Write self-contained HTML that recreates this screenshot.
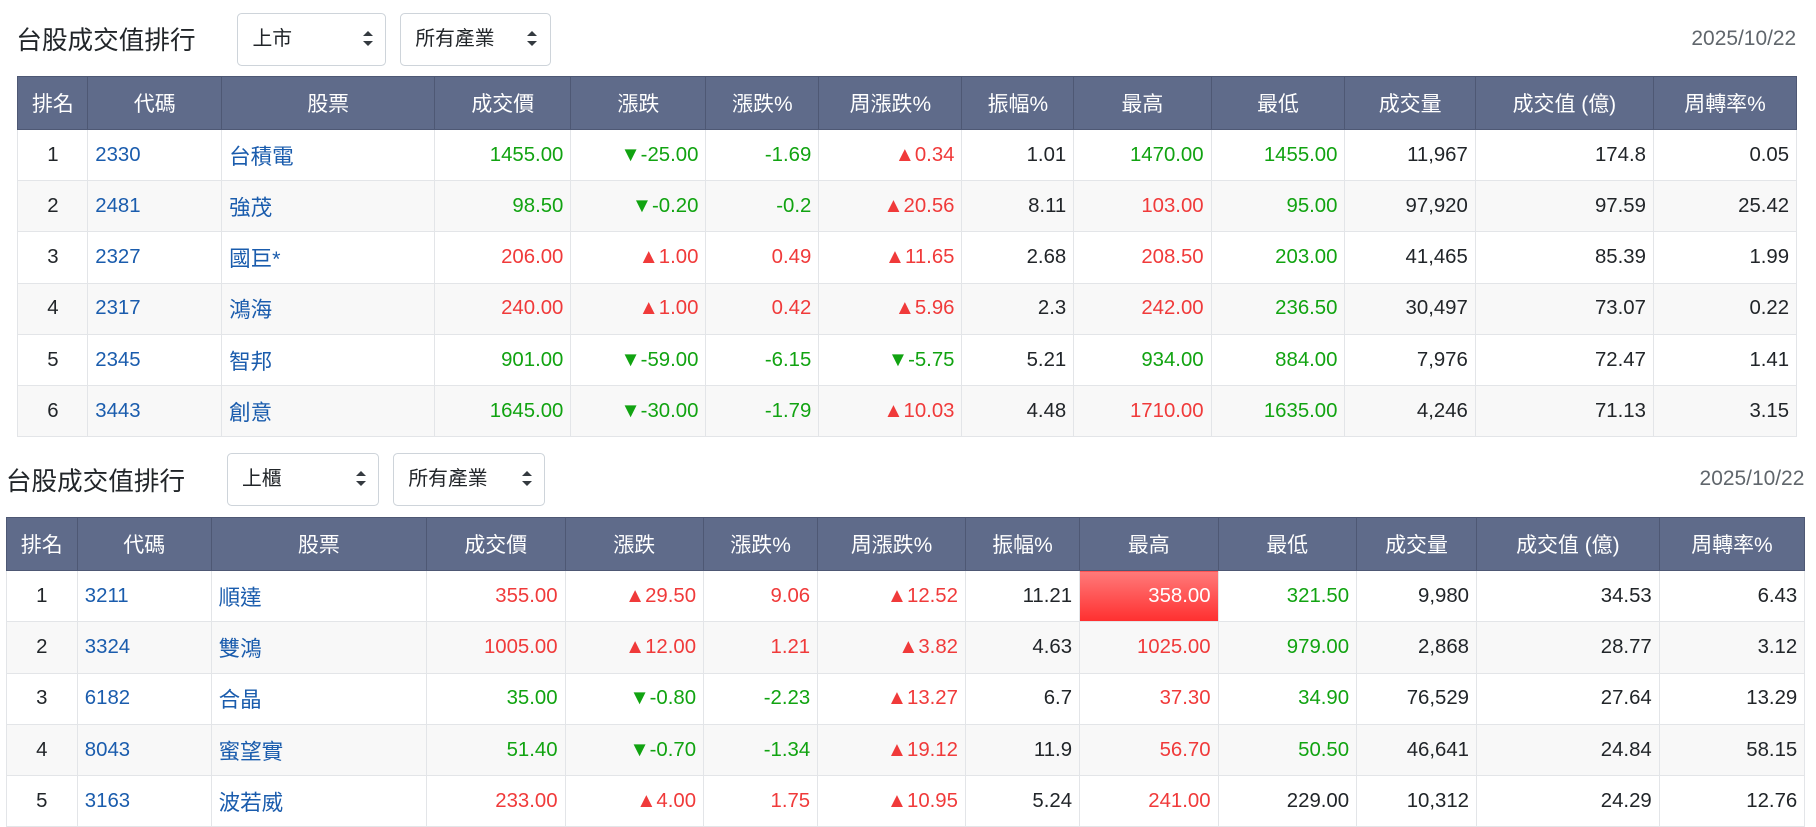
<!DOCTYPE html>
<html><head><meta charset="utf-8"><style>
html,body{margin:0;padding:0;background:#fff;overflow:hidden}
body{width:1560px;height:710px;zoom:1.16410;position:relative;font-family:"Liberation Sans","Noto Sans CJK TC",sans-serif;color:#212529}
.t{position:absolute;font-size:22px;color:#212529}
.sel{position:absolute;height:44px;border:1px solid #ced4da;border-radius:4px;box-sizing:border-box;font-size:17px;line-height:42px;padding-left:12px;background:#fff}
.sel i{position:absolute;right:14px;top:15px;width:0;height:0}
.sel i:before{content:"";position:absolute;left:-5px;top:0;border:5px solid transparent;border-bottom:5px solid #343a40;border-top:0}
.sel i:after{content:"";position:absolute;left:-5px;top:8px;border:5px solid transparent;border-top:5px solid #343a40;border-bottom:0}
.d{position:absolute;font-size:18px;color:#60666c}
table{position:absolute;border-collapse:collapse;table-layout:fixed;font-size:17.5px}
th{background:#5f6b8a;color:#fff;font-weight:normal;height:45px;border:1px solid #4e5874;padding:0;text-align:center;font-size:18px;overflow:hidden;white-space:nowrap}
td{height:44px;border:1px solid #e3e5e8;padding:0 6px 0 0;text-align:right;white-space:nowrap;box-sizing:border-box;overflow:hidden}
tr:nth-child(odd) td{background:#f8f8f8}
td.c{text-align:center;padding:0}td.l{text-align:left;color:#1a5cad;padding:0 0 0 6px}
td.l.n{font-size:18.5px}
.g{color:#11a311}.r{color:#f03a3a}
.hl{background:linear-gradient(#ff7a7a,#ff2f2f)!important;color:#fff}
.w1{overflow:hidden;position:absolute;left:0;top:0;width:1560px;height:376px}
.w2{overflow:hidden;position:absolute;left:0;top:0;width:1560px;height:710px}
</style></head><body>
<div class="t" style="left:14px;top:17px">台股成交值排行</div>
<div class="sel" style="left:204px;top:11px;width:128px;height:46px;line-height:44px">上市<i></i></div>
<div class="sel" style="left:344px;top:11px;width:129px;height:46px;line-height:44px">所有產業<i></i></div>
<div class="d" style="right:17px;top:23px">2025/10/22</div>
<div class="w1">
<table style="left:15px;top:65px;width:1528px">
<colgroup><col style="width:60px"><col style="width:115px"><col style="width:183px"><col style="width:117px"><col style="width:116px"><col style="width:97px"><col style="width:123px"><col style="width:96px"><col style="width:118px"><col style="width:115px"><col style="width:112px"><col style="width:153px"><col style="width:123px"></colgroup>
<tr><th>排名</th><th>代碼</th><th>股票</th><th>成交價</th><th>漲跌</th><th>漲跌%</th><th>周漲跌%</th><th>振幅%</th><th>最高</th><th>最低</th><th>成交量</th><th>成交值 (億)</th><th>周轉率%</th></tr>
<tr><td class="c">1</td><td class="l">2330</td><td class="l n">台積電</td><td class="g">1455.00</td><td class="g">▼-25.00</td><td class="g">-1.69</td><td class="r">▲0.34</td><td>1.01</td><td class="g">1470.00</td><td class="g">1455.00</td><td>11,967</td><td>174.8</td><td>0.05</td></tr>
<tr><td class="c">2</td><td class="l">2481</td><td class="l n">強茂</td><td class="g">98.50</td><td class="g">▼-0.20</td><td class="g">-0.2</td><td class="r">▲20.56</td><td>8.11</td><td class="r">103.00</td><td class="g">95.00</td><td>97,920</td><td>97.59</td><td>25.42</td></tr>
<tr><td class="c">3</td><td class="l">2327</td><td class="l n">國巨*</td><td class="r">206.00</td><td class="r">▲1.00</td><td class="r">0.49</td><td class="r">▲11.65</td><td>2.68</td><td class="r">208.50</td><td class="g">203.00</td><td>41,465</td><td>85.39</td><td>1.99</td></tr>
<tr><td class="c">4</td><td class="l">2317</td><td class="l n">鴻海</td><td class="r">240.00</td><td class="r">▲1.00</td><td class="r">0.42</td><td class="r">▲5.96</td><td>2.3</td><td class="r">242.00</td><td class="g">236.50</td><td>30,497</td><td>73.07</td><td>0.22</td></tr>
<tr><td class="c">5</td><td class="l">2345</td><td class="l n">智邦</td><td class="g">901.00</td><td class="g">▼-59.00</td><td class="g">-6.15</td><td class="g">▼-5.75</td><td>5.21</td><td class="g">934.00</td><td class="g">884.00</td><td>7,976</td><td>72.47</td><td>1.41</td></tr>
<tr><td class="c">6</td><td class="l">3443</td><td class="l n">創意</td><td class="g">1645.00</td><td class="g">▼-30.00</td><td class="g">-1.79</td><td class="r">▲10.03</td><td>4.48</td><td class="r">1710.00</td><td class="g">1635.00</td><td>4,246</td><td>71.13</td><td>3.15</td></tr>
</table></div>
<div class="t" style="left:5px;top:396px">台股成交值排行</div>
<div class="sel" style="left:195px;top:389px;width:131px;height:46px;line-height:44px">上櫃<i></i></div>
<div class="sel" style="left:338px;top:389px;width:130px;height:46px;line-height:44px">所有產業<i></i></div>
<div class="d" style="right:10px;top:401px">2025/10/22</div>
<div class="w2">
<table style="left:5px;top:444px;width:1545px">
<colgroup><col style="width:61px"><col style="width:115px"><col style="width:185px"><col style="width:119px"><col style="width:119px"><col style="width:98px"><col style="width:127px"><col style="width:98px"><col style="width:119px"><col style="width:119px"><col style="width:103px"><col style="width:157px"><col style="width:125px"></colgroup>
<tr><th>排名</th><th>代碼</th><th>股票</th><th>成交價</th><th>漲跌</th><th>漲跌%</th><th>周漲跌%</th><th>振幅%</th><th>最高</th><th>最低</th><th>成交量</th><th>成交值 (億)</th><th>周轉率%</th></tr>
<tr><td class="c">1</td><td class="l">3211</td><td class="l n">順達</td><td class="r">355.00</td><td class="r">▲29.50</td><td class="r">9.06</td><td class="r">▲12.52</td><td>11.21</td><td class="hl">358.00</td><td class="g">321.50</td><td>9,980</td><td>34.53</td><td>6.43</td></tr>
<tr><td class="c">2</td><td class="l">3324</td><td class="l n">雙鴻</td><td class="r">1005.00</td><td class="r">▲12.00</td><td class="r">1.21</td><td class="r">▲3.82</td><td>4.63</td><td class="r">1025.00</td><td class="g">979.00</td><td>2,868</td><td>28.77</td><td>3.12</td></tr>
<tr><td class="c">3</td><td class="l">6182</td><td class="l n">合晶</td><td class="g">35.00</td><td class="g">▼-0.80</td><td class="g">-2.23</td><td class="r">▲13.27</td><td>6.7</td><td class="r">37.30</td><td class="g">34.90</td><td>76,529</td><td>27.64</td><td>13.29</td></tr>
<tr><td class="c">4</td><td class="l">8043</td><td class="l n">蜜望實</td><td class="g">51.40</td><td class="g">▼-0.70</td><td class="g">-1.34</td><td class="r">▲19.12</td><td>11.9</td><td class="r">56.70</td><td class="g">50.50</td><td>46,641</td><td>24.84</td><td>58.15</td></tr>
<tr><td class="c">5</td><td class="l">3163</td><td class="l n">波若威</td><td class="r">233.00</td><td class="r">▲4.00</td><td class="r">1.75</td><td class="r">▲10.95</td><td>5.24</td><td class="r">241.00</td><td>229.00</td><td>10,312</td><td>24.29</td><td>12.76</td></tr>
</table></div>
</body></html>
